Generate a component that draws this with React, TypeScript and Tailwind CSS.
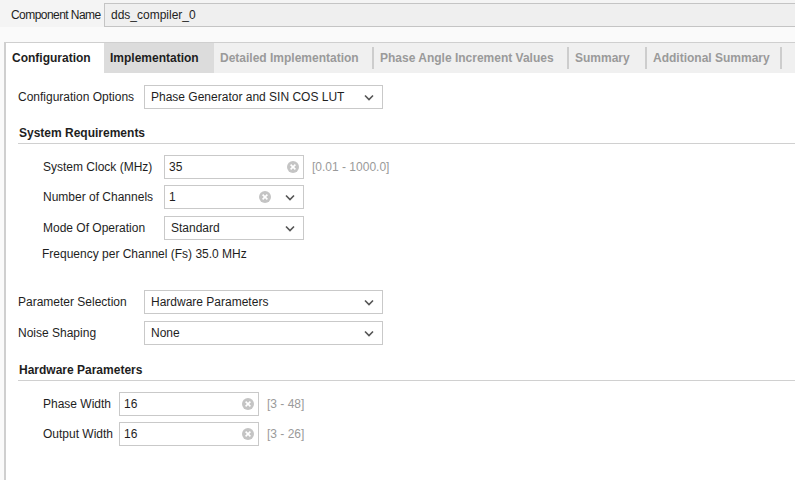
import { ReactNode } from "react";

const font = { fontFamily: '"Liberation Sans", Arial, sans-serif' };

const Chevron = () => (
  <svg width="10" height="7" viewBox="0 0 10 7" className="shrink-0">
    <path d="M1 1.5 L5 5.5 L9 1.5" fill="none" stroke="#555" strokeWidth="1.6" />
  </svg>
);

const ClearIcon = () => (
  <svg width="12" height="12" viewBox="0 0 12 12" className="shrink-0">
    <circle cx="6" cy="6" r="6" fill="#c4c4c4" />
    <path d="M3.6 3.6 L8.4 8.4 M8.4 3.6 L3.6 8.4" stroke="#fff" strokeWidth="1.6" />
  </svg>
);

// Dropdown box with a chevron at the right
const Select = ({ value, width }: { value: string; width: string }) => (
  <div className={`${width} h-[24px] border border-[#c9c9c9] bg-white flex items-center pl-[6px] pr-[8px]`}>
    <span className="flex-1">{value}</span>
    <Chevron />
  </div>
);

// Text input with a clear button, optionally a dropdown arrow too
const Field = ({ value, width, combo }: { value: string; width: string; combo?: boolean }) => (
  <div className={`${width} h-[24px] border border-[#c9c9c9] bg-white flex items-center pl-[4px] pr-[4px]`}>
    <span className="flex-1">{value}</span>
    <ClearIcon />
    {combo && (
      <span className="ml-[14px] mr-[4px] flex">
        <Chevron />
      </span>
    )}
  </div>
);

const Row = ({ label, labelWidth, children }: { label: string; labelWidth: string; children: ReactNode }) => (
  <div className="flex items-center">
    <span className={`${labelWidth} shrink-0 whitespace-nowrap`}>{label}</span>
    {children}
  </div>
);

const Section = ({ title }: { title: string }) => (
  <div className="ml-[12px] border-b border-[#d0d0d0] pb-[1px] pl-[1px] font-bold">{title}</div>
);

const tabs = [
  { name: "Detailed Implementation", w: "w-[160px]" },
  { name: "Phase Angle Increment Values", w: "w-[195px]" },
  { name: "Summary", w: "w-[78px]" },
  { name: "Additional Summary", w: "w-[135px]" },
];

export default function App() {
  return (
    <div className="w-[795px] h-[480px] overflow-hidden bg-[#fafafa] text-[12px] leading-[18px] text-[#1e1e1e] flex flex-col" style={font}>
      <div className="h-[27px] bg-[#f4f4f4] flex items-center pt-[2px]">
        <span className="pl-[11px] w-[104px] shrink-0 whitespace-nowrap tracking-[-0.55px]">Component Name</span>
        <div className="flex-1 h-[24px] border border-[#c4c4c4] border-r-0 bg-[#efefef] flex items-center pl-[6px]">
          dds_compiler_0
        </div>
      </div>
      <div className="h-[15px]" />
      <div className="flex-1 ml-[4px] border-l-2 border-t border-[#cfcfcf] flex flex-col bg-white">
        <div className="h-[30px] flex bg-[#f0f0f0] font-bold">
          <div className="w-[98px] bg-white flex items-center pl-[6px]">Configuration</div>
          <div className="w-[110px] bg-[#dcdcdc] flex items-center pl-[6px]">Implementation</div>
          {tabs.map((t) => (
            <div key={t.name} className={`${t.w} flex items-center pl-[6px] text-[#9a9a9a] relative`}>
              {t.name}
              <span className="absolute right-0 top-[4px] bottom-[4px] w-[2px] bg-[#cdcdcd]" />
            </div>
          ))}
        </div>

        <div className="flex flex-col pt-[12px]">
          <div className="pl-[12px]">
            <Row label="Configuration Options" labelWidth="w-[126px]">
              <Select value="Phase Generator and SIN COS LUT" width="w-[239px]" />
            </Row>
          </div>

          <div className="mt-[15px]">
            <Section title="System Requirements" />
          </div>

          <div className="pl-[37px] pt-[11px] flex flex-col gap-[6px]">
            <Row label="System Clock (MHz)" labelWidth="w-[121px]">
              <Field value="35" width="w-[140px]" />
              <span className="ml-[8px] text-[#9a9a9a]">[0.01 - 1000.0]</span>
            </Row>
            <Row label="Number of Channels" labelWidth="w-[121px]">
              <Field value="1" width="w-[140px]" combo />
            </Row>
            <div className="mt-[1px]">
              <Row label="Mode Of Operation" labelWidth="w-[121px]">
                <Select value="Standard" width="w-[140px]" />
              </Row>
            </div>
            <div className="-mt-[1px] -ml-[1px]">Frequency per Channel (Fs) 35.0 MHz</div>
          </div>

          <div className="pl-[12px] pt-[27px] flex flex-col gap-[7px]">
            <Row label="Parameter Selection" labelWidth="w-[126px]">
              <Select value="Hardware Parameters" width="w-[239px]" />
            </Row>
            <Row label="Noise Shaping" labelWidth="w-[126px]">
              <Select value="None" width="w-[239px]" />
            </Row>
          </div>

          <div className="mt-[16px]">
            <Section title="Hardware Parameters" />
          </div>

          <div className="pl-[37px] pt-[11px] flex flex-col gap-[6px]">
            <Row label="Phase Width" labelWidth="w-[76px]">
              <Field value="16" width="w-[140px]" />
              <span className="ml-[8px] text-[#9a9a9a]">[3 - 48]</span>
            </Row>
            <Row label="Output Width" labelWidth="w-[76px]">
              <Field value="16" width="w-[140px]" />
              <span className="ml-[8px] text-[#9a9a9a]">[3 - 26]</span>
            </Row>
          </div>
        </div>
      </div>
    </div>
  );
}
